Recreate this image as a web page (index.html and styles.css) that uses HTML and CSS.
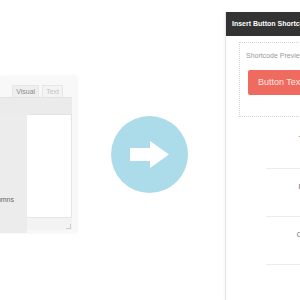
FILE: index.html
```html
<!DOCTYPE html>
<html lang="en">
<head>
    <meta charset="UTF-8">
    <title>Button Shortcode</title>
    <link rel="stylesheet" href="styles.css">
</head>
<body>
    <div class="stage">
        <div class="editor">
            <div class="tabs">
                <span class="tab active">Visual</span>
                <span class="tab">Text</span>
            </div>
            <div class="toolbar"></div>
            <div class="editor-body">
                <div class="menu">
                    <span class="menu-item">Columns</span>
                </div>
                <div class="content">
                    <div class="textarea"></div>
                    <div class="status"><span class="grip"></span></div>
                </div>
            </div>
        </div>

        <div class="arrow">
            <svg width="77" height="77" viewBox="0 0 77 77">
                <circle cx="38.5" cy="38.5" r="38.5" fill="#acdcea"/>
                <path d="M19 32 H39 V25 L58 38.5 L39 52 V45 H19 Z" fill="#fff"/>
            </svg>
        </div>

        <div class="panel">
            <div class="panel-head">Insert Button Shortcode</div>
            <div class="preview">
                <div class="preview-label">Shortcode Preview</div>
                <a href="#" class="btn">Button Text</a>
            </div>
            <div class="fields">
                <div class="field"><label>Text</label></div>
                <div class="field"><label>Link</label></div>
                <div class="field"><label>Color</label></div>
            </div>
        </div>
    </div>
</body>
</html>
```

FILE: styles.css
```css
* {
    margin: 0;
    padding: 0;
    box-sizing: border-box;
    font-family: 'Liberation Sans', Arial, sans-serif;
}

body {
    width: 300px;
    height: 300px;
    overflow: hidden;
    background: #fff;
}

.stage {
    display: flex;
    align-items: flex-start;
    height: 300px;
}

/* editor screenshot on the left */
.editor {
    flex: none;
    width: 77px;
    height: 157px;
    margin-top: 76px;
    background: #f8f8f8;
    box-shadow: 0 0 3px rgba(0, 0, 0, 0.06);
}

.tabs {
    height: 21px;
    display: flex;
    justify-content: flex-end;
    align-items: flex-end;
    gap: 3px;
    padding-right: 14px;
}

.tab {
    height: 12px;
    padding: 0 3px;
    font-size: 7px;
    line-height: 12px;
    color: #c4c4c4;
    border: 1px solid #e6e6e6;
    border-bottom: none;
    background: #f4f4f4;
}

.tab.active {
    color: #8a8a8a;
    background: #efefef;
}

.toolbar {
    width: 72px;
    height: 17px;
    background: #ebebeb;
    border-top: 1px solid #e2e2e2;
}

.editor-body {
    display: flex;
    height: 119px;
}

.menu {
    width: 27px;
    height: 119px;
    background: #ececec;
    display: flex;
    justify-content: flex-end;
    align-items: flex-start;
    padding: 82px 13px 0 0;
    overflow: hidden;
}

.menu-item {
    font-size: 7px;
    color: #666;
    white-space: nowrap;
}

.content {
    width: 45px;
    padding-bottom: 3px;
}

.textarea {
    height: 104px;
    background: #fff;
    border: 1px solid #e4e4e4;
    border-left: none;
}

.status {
    height: 12px;
    background: #f3f3f3;
    position: relative;
}

.grip {
    position: absolute;
    right: 1px;
    bottom: 1px;
    width: 5px;
    height: 5px;
    border-right: 1px solid #ccc;
    border-bottom: 1px solid #ccc;
}

/* arrow in the middle */
.arrow {
    flex: none;
    margin: 116px 0 0 34px;
    height: 77px;
}

/* shortcode dialog on the right */
.panel {
    flex: none;
    width: 160px;
    height: 288px;
    margin: 12px 0 0 37px;
    background: #fff;
    border-left: 1px solid #e6e6e6;
    box-shadow: -1px 0 2px rgba(0, 0, 0, 0.04);
}

.panel-head {
    height: 24px;
    background: #333;
    color: #fff;
    font-size: 7px;
    font-weight: bold;
    line-height: 24px;
    padding-left: 6px;
    white-space: nowrap;
}

.preview {
    margin: 6px 0 0 13px;
    height: 75px;
    border: 1px dotted #d4d4d4;
    padding: 9px 0 0 6px;
}

.preview-label {
    font-size: 7px;
    line-height: 8px;
    color: #9a9a9a;
    white-space: nowrap;
}

.btn {
    display: inline-block;
    margin: 10px 0 0 2px;
    width: 80px;
    height: 25px;
    line-height: 25px;
    padding-left: 10px;
    background: #ef6b5f;
    color: #fde8e5;
    font-size: 9px;
    text-decoration: none;
    border-radius: 2px;
    white-space: nowrap;
}

.fields {
    margin: 4px 0 0 40px;
}

.field {
    height: 48px;
    border-bottom: 1px solid #ececec;
    padding-top: 14px;
}

.field label {
    display: block;
    width: 78px;
    text-align: center;
    font-size: 7px;
    line-height: 8px;
    color: #666;
}
```
